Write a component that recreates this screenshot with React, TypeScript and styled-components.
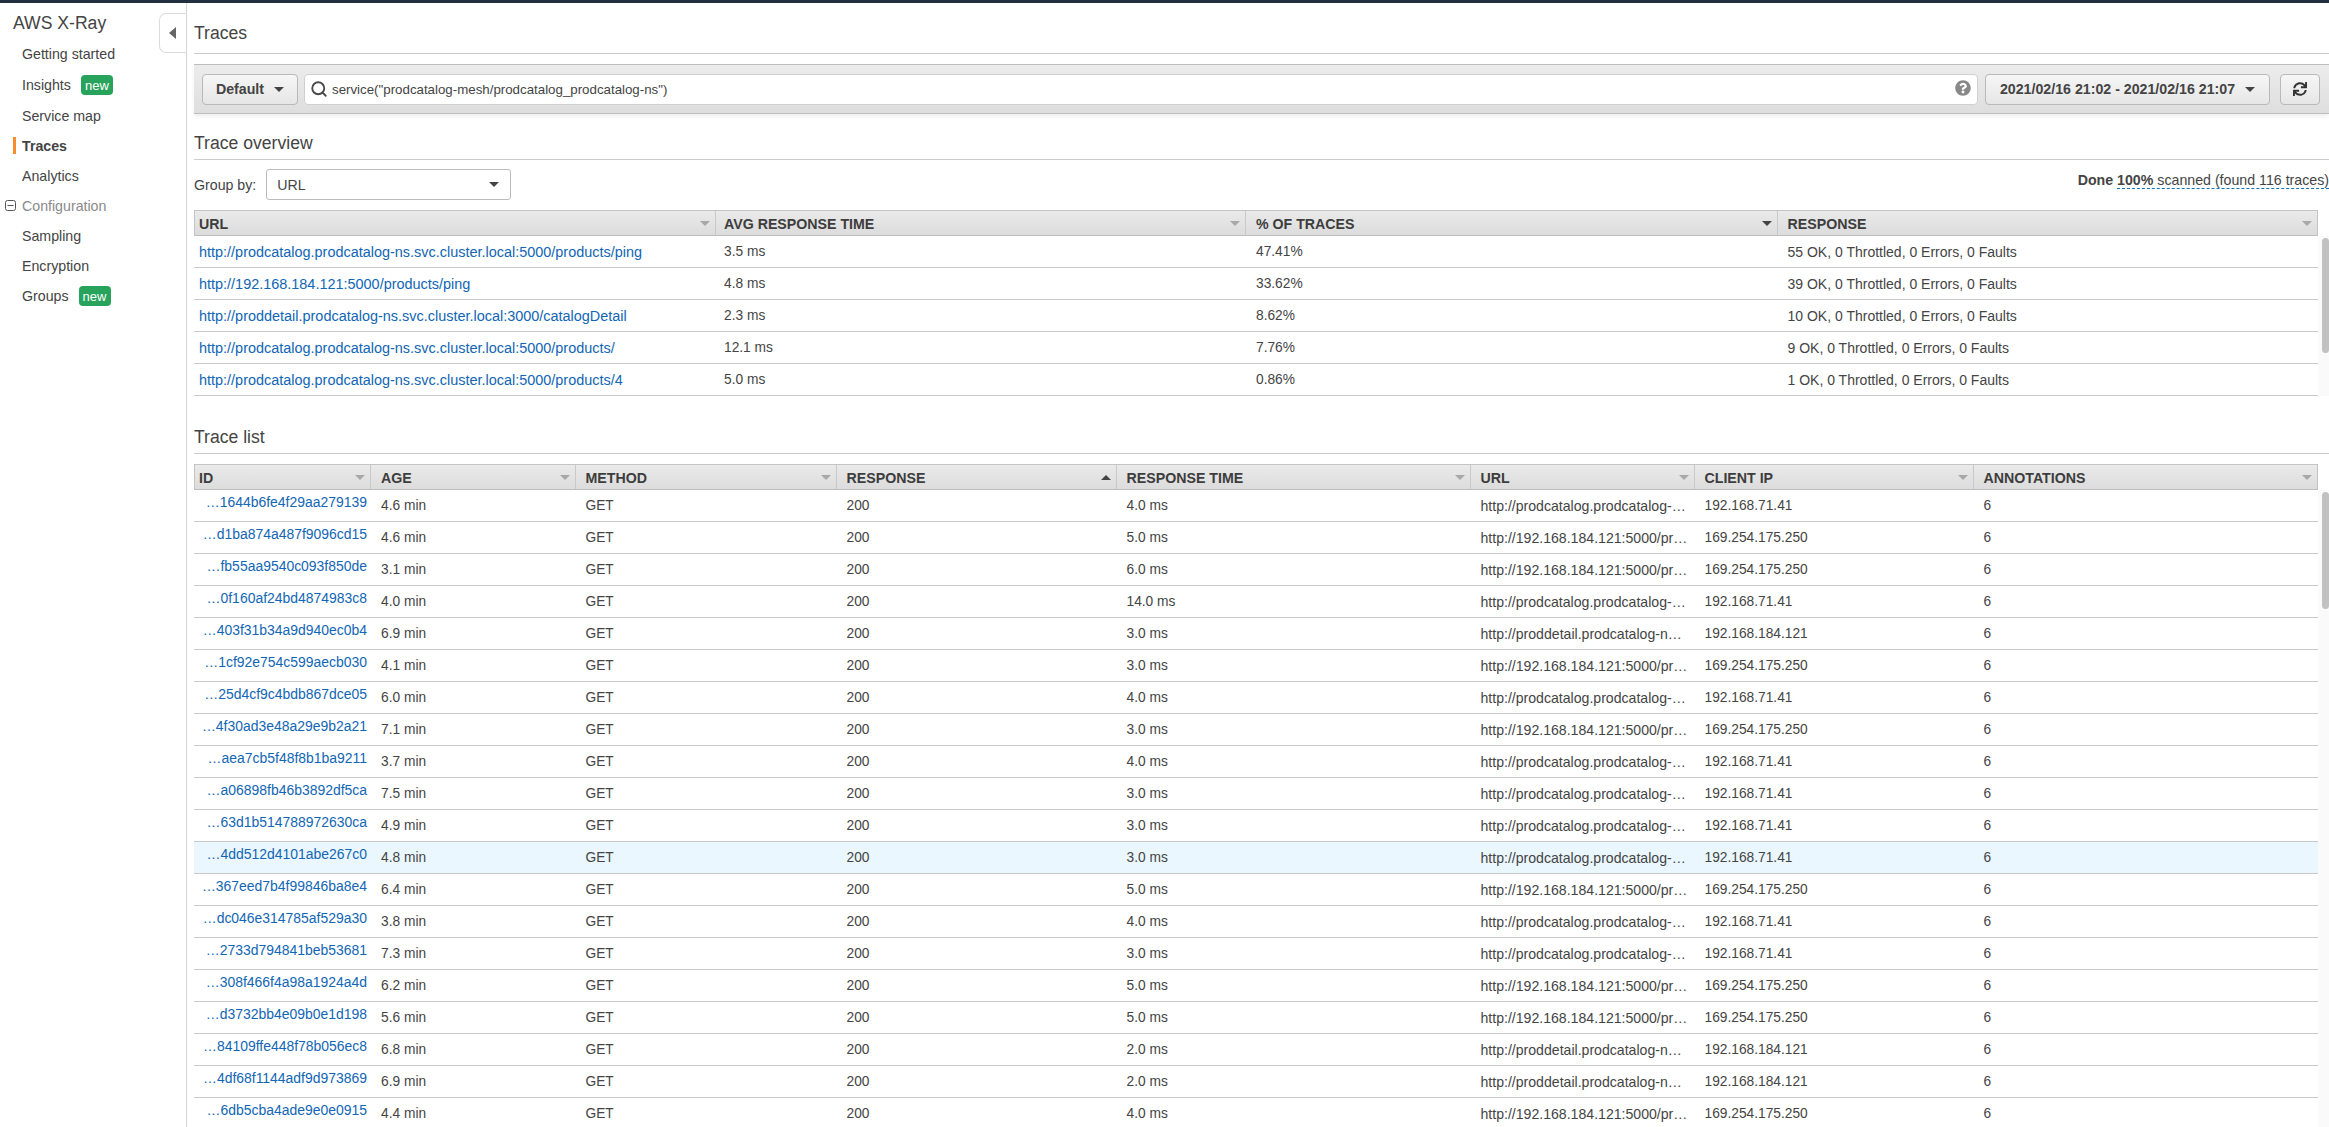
import React from "react";
import styled, { createGlobalStyle } from "styled-components";
import { Search } from "lucide-react";
import { FaQuestionCircle, FaSync } from "react-icons/fa";

const Global = createGlobalStyle`
  html, body, #root { margin: 0; height: 100%; overflow: hidden; background: #fff; }
  body { font-family: "Liberation Sans", Arial, sans-serif; color: #444; }
  * { box-sizing: border-box; }
`;

const Page = styled.div`
  height: 1127px;
  display: flex;
  flex-direction: column;
  overflow: hidden;
`;
const TopBar = styled.div`
  height: 3px;
  flex: none;
  background: #232f3e;
`;
const Body = styled.div`
  flex: 1;
  display: flex;
  min-height: 0;
`;

/* ---------- side navigation ---------- */
const Sidebar = styled.nav`
  position: relative;
  flex: none;
  width: 187px;
  border-right: 1px solid #d5d5d5;
`;
const Brand = styled.div`
  padding: 8px 0 4px 13px;
  font-size: 17.6px;
  line-height: 24px;
  color: #444;
`;
const NavItem = styled.div<{ $active?: boolean; $tall?: boolean; $muted?: boolean }>`
  position: relative;
  display: flex;
  align-items: center;
  gap: 10px;
  height: ${(p) => (p.$tall ? 32 : 30)}px;
  padding-left: 22px;
  font-size: 14.2px;
  font-weight: ${(p) => (p.$active ? 700 : 400)};
  color: ${(p) => (p.$muted ? "#8a8a8a" : "#444")};
`;
const ActiveMark = styled.span`
  position: absolute;
  left: 13px;
  top: 6px;
  width: 3px;
  height: 17px;
  background: #f68d2e;
`;
const ExpandIcon = styled.svg`
  position: absolute;
  left: 5px;
  top: 9px;
  width: 11px;
  height: 11px;
`;
const NewBadge = styled.span`
  display: inline-flex;
  align-items: center;
  justify-content: center;
  width: 32px;
  height: 20px;
  border-radius: 4px;
  background: #28a35c;
  color: #fff;
  font-size: 13px;
`;
const CollapseTab = styled.button`
  position: absolute;
  top: 10px;
  right: -1px;
  width: 28px;
  height: 40px;
  padding: 0 0 0 9px;
  display: flex;
  align-items: center;
  background: #fff;
  border: 1px solid #dcdcdc;
  border-right: 1px solid #d5d5d5;
  border-radius: 7px 0 0 7px;
`;
const LeftCaret = styled.span`
  width: 0;
  height: 0;
  border-style: solid;
  border-width: 6px 7px 6px 0;
  border-color: transparent #666 transparent transparent;
`;

/* ---------- main column ---------- */
const Main = styled.main`
  flex: 1;
  min-width: 0;
  padding-left: 7px;
`;
const Heading = styled.h2<{ $top: number }>`
  margin: 0;
  padding: ${(p) => p.$top}px 0 3px;
  font-size: 17.6px;
  font-weight: 400;
  line-height: 26px;
  color: #444;
  border-bottom: 1px solid #ccc;
`;
const PageHeading = styled(Heading)`
  padding-bottom: 7px;
`;
const Toolbar = styled.div`
  display: flex;
  align-items: center;
  height: 50px;
  margin-top: 10px;
  padding: 0 9px 0 8px;
  background: linear-gradient(#ececec, #dedede);
  border-top: 1px solid #bdbdbd;
  border-bottom: 1px solid #bdbdbd;
  box-shadow: 0 3px 4px rgba(0, 0, 0, 0.06);
`;
const Button = styled.button<{ $w: number; $gapLeft?: number }>`
  flex: none;
  display: flex;
  align-items: center;
  justify-content: center;
  gap: 10px;
  width: ${(p) => p.$w}px;
  height: 31px;
  margin-left: ${(p) => p.$gapLeft ?? 0}px;
  padding: 0;
  font-family: inherit;
  font-size: 14.2px;
  font-weight: 700;
  color: #444;
  background: linear-gradient(#f6f6f6, #e6e6e6);
  border: 1px solid #b9b9b9;
  border-radius: 4px;
`;
const Caret = styled.span<{ $color?: string; $up?: boolean }>`
  flex: none;
  width: 0;
  height: 0;
  border-left: 5px solid transparent;
  border-right: 5px solid transparent;
  ${(p) => (p.$up ? "border-bottom" : "border-top")}: 5px solid ${(p) => p.$color ?? "#444"};
`;
const SearchBox = styled.div`
  flex: 1;
  display: flex;
  align-items: center;
  height: 31px;
  margin-left: 6px;
  padding: 0 6px 0 5px;
  background: #fff;
  border: 1px solid #d0d0d0;
  border-radius: 4px;
  font-size: 13.3px;
  color: #444;
`;
const SearchIcon = styled(Search)`
  flex: none;
  margin-right: 4px;
  color: #4a4a4a;
`;
const QueryText = styled.span`
  flex: 1;
`;
const HelpIcon = styled(FaQuestionCircle)`
  flex: none;
  color: #888;
  font-size: 16px;
  margin-top: -3px;
`;
const RefreshIcon = styled(FaSync)`
  color: #333;
  font-size: 14px;
`;

const GroupRow = styled.div`
  display: flex;
  align-items: center;
  justify-content: space-between;
  margin: 9px 0 10px;
  height: 31px;
  font-size: 14.2px;
`;
const GroupBy = styled.label`
  display: flex;
  align-items: center;
  gap: 10px;
`;
const SelectBox = styled.div`
  display: flex;
  align-items: center;
  justify-content: space-between;
  width: 245px;
  height: 31px;
  padding: 0 11px 0 10px;
  background: #fff;
  border: 1px solid #bbb;
  border-radius: 3px;
`;
const Status = styled.div`
  margin-top: -9px;
`;
const Scanned = styled.span`
  border-bottom: 1px dashed #0f73bb;
`;
const Strong = styled.b`
  font-weight: 700;
`;

/* ---------- data tables ---------- */
const TableShell = styled.div<{ $top?: number }>`
  display: flex;
  align-items: stretch;
  margin-top: ${(p) => p.$top ?? 0}px;
`;
const TableFrame = styled.div`
  flex: none;
  width: 2124px;
`;
const Gutter = styled.div`
  flex: 1;
  margin-top: 26px;
  padding: 2px 0 0 4px;
  background: #fafafa;
`;
const Thumb = styled.div<{ $h: number }>`
  width: 7px;
  height: ${(p) => p.$h}px;
  border-radius: 4px;
  background: #c1c1c1;
`;
const HeaderRow = styled.div<{ $cols: string }>`
  display: grid;
  grid-template-columns: ${(p) => p.$cols};
  height: 26px;
  background: linear-gradient(#eaeaea, #dcdcdc);
  border: 1px solid #c4c4c4;
  border-bottom-color: #bdbdbd;
`;
const HeaderCell = styled.div<{ $pad?: number }>`
  display: flex;
  align-items: center;
  justify-content: space-between;
  min-width: 0;
  padding: 1px 5px 0 ${(p) => p.$pad ?? 10}px;
  font-size: 14.2px;
  font-weight: 700;
  color: #3d3d3d;
  border-right: 1px solid #c9c9c9;
  text-transform: uppercase;
  white-space: nowrap;
  &:first-child { padding-left: 4px; }
  &:last-child { border-right: 0; }
`;
const Row = styled.div<{ $cols: string; $hot?: boolean }>`
  display: grid;
  grid-template-columns: ${(p) => p.$cols};
  height: 32px;
  background: ${(p) => (p.$hot ? "#ebf7fe" : "#fff")};
  border-bottom: 1px solid #c9c9c9;
`;
const Cell = styled.div<{ $pad?: number; $size?: number }>`
  display: flex;
  align-items: center;
  min-width: 0;
  padding-left: ${(p) => p.$pad ?? 11}px;
  font-size: ${(p) => p.$size ?? 13.75}px;
  color: #444;
  white-space: nowrap;
  &:first-child { padding-left: 5px; }
`;
const IdCell = styled(Cell)`
  justify-content: flex-end;
  padding: 0 3px 7px 0;
`;
const Link = styled.a`
  color: #1166b5;
  text-decoration: none;
`;

const OVERVIEW_COLS = "521px 530px 531.5px 1fr";
const LIST_COLS = "176px 204.5px 261px 280px 354px 224px 279px 1fr";

const PROD = "http://prodcatalog.prodcatalog-ns.svc.cluster.local:5000/products/ping";
const IP = "http://192.168.184.121:5000/products/ping";
const DETAIL = "http://proddetail.prodcatalog-ns.svc.cluster.local:3000/catalogDetail";
const PROD_CUT = "http://prodcatalog.prodcatalog-…";
const IP_CUT = "http://192.168.184.121:5000/pr…";
const DETAIL_CUT = "http://proddetail.prodcatalog-n…";
const A = "192.168.71.41";
const B = "169.254.175.250";
const C = "192.168.184.121";

const overview = [
  [PROD, "3.5 ms", "47.41%", "55 OK, 0 Throttled, 0 Errors, 0 Faults"],
  [IP, "4.8 ms", "33.62%", "39 OK, 0 Throttled, 0 Errors, 0 Faults"],
  [DETAIL, "2.3 ms", "8.62%", "10 OK, 0 Throttled, 0 Errors, 0 Faults"],
  ["http://prodcatalog.prodcatalog-ns.svc.cluster.local:5000/products/", "12.1 ms", "7.76%", "9 OK, 0 Throttled, 0 Errors, 0 Faults"],
  ["http://prodcatalog.prodcatalog-ns.svc.cluster.local:5000/products/4", "5.0 ms", "0.86%", "1 OK, 0 Throttled, 0 Errors, 0 Faults"],
];

const traces: [string, string, string, string, string][] = [
  ["1644b6fe4f29aa279139", "4.6", "4.0", PROD_CUT, A],
  ["d1ba874a487f9096cd15", "4.6", "5.0", IP_CUT, B],
  ["fb55aa9540c093f850de", "3.1", "6.0", IP_CUT, B],
  ["0f160af24bd4874983c8", "4.0", "14.0", PROD_CUT, A],
  ["403f31b34a9d940ec0b4", "6.9", "3.0", DETAIL_CUT, C],
  ["1cf92e754c599aecb030", "4.1", "3.0", IP_CUT, B],
  ["25d4cf9c4bdb867dce05", "6.0", "4.0", PROD_CUT, A],
  ["4f30ad3e48a29e9b2a21", "7.1", "3.0", IP_CUT, B],
  ["aea7cb5f48f8b1ba9211", "3.7", "4.0", PROD_CUT, A],
  ["a06898fb46b3892df5ca", "7.5", "3.0", PROD_CUT, A],
  ["63d1b514788972630ca", "4.9", "3.0", PROD_CUT, A],
  ["4dd512d4101abe267c0", "4.8", "3.0", PROD_CUT, A],
  ["367eed7b4f99846ba8e4", "6.4", "5.0", IP_CUT, B],
  ["dc046e314785af529a30", "3.8", "4.0", PROD_CUT, A],
  ["2733d794841beb53681", "7.3", "3.0", PROD_CUT, A],
  ["308f466f4a98a1924a4d", "6.2", "5.0", IP_CUT, B],
  ["d3732bb4e09b0e1d198", "5.6", "5.0", IP_CUT, B],
  ["84109ffe448f78b056ec8", "6.8", "2.0", DETAIL_CUT, C],
  ["4df68f1144adf9d973869", "6.9", "2.0", DETAIL_CUT, C],
  ["6db5cba4ade9e0e0915", "4.4", "4.0", IP_CUT, B],
];

const Head = ({ label, sort, pad }: { label: string; sort?: "up" | "down"; pad?: number }) => (
  <HeaderCell $pad={pad}>
    {label}
    <Caret $up={sort === "up"} $color={sort ? "#444" : "#a8a8a8"} />
  </HeaderCell>
);

export default function App() {
  return (
    <Page>
      <Global />
      <TopBar />
      <Body>
        <Sidebar>
          <Brand>AWS X-Ray</Brand>
          <NavItem>Getting started</NavItem>
          <NavItem $tall>
            Insights <NewBadge>new</NewBadge>
          </NavItem>
          <NavItem>Service map</NavItem>
          <NavItem $active>
            <ActiveMark />
            Traces
          </NavItem>
          <NavItem>Analytics</NavItem>
          <NavItem $muted>
            <ExpandIcon viewBox="0 0 11 11">
              <rect x="0.5" y="0.5" width="10" height="10" rx="2" fill="none" stroke="#555" />
              <path d="M2.5 5.5h6" stroke="#555" />
            </ExpandIcon>
            Configuration
          </NavItem>
          <NavItem>Sampling</NavItem>
          <NavItem>Encryption</NavItem>
          <NavItem>
            Groups <NewBadge>new</NewBadge>
          </NavItem>
          <CollapseTab aria-label="Collapse">
            <LeftCaret />
          </CollapseTab>
        </Sidebar>

        <Main>
          <PageHeading $top={17}>Traces</PageHeading>
          <Toolbar>
            <Button $w={96}>
              Default <Caret />
            </Button>
            <SearchBox>
              <SearchIcon size={18} strokeWidth={2.5} />
              <QueryText>service("prodcatalog-mesh/prodcatalog_prodcatalog-ns")</QueryText>
              <HelpIcon />
            </SearchBox>
            <Button $w={285} $gapLeft={7}>
              2021/02/16 21:02 - 2021/02/16 21:07 <Caret />
            </Button>
            <Button $w={40} $gapLeft={10}>
              <RefreshIcon />
            </Button>
          </Toolbar>

          <Heading $top={16}>Trace overview</Heading>
          <GroupRow>
            <GroupBy>
              Group by:
              <SelectBox>
                URL <Caret />
              </SelectBox>
            </GroupBy>
            <Status>
              <Strong>Done </Strong>
              <Scanned>
                <Strong>100%</Strong> scanned (found 116 traces)
              </Scanned>
            </Status>
          </GroupRow>
          <TableShell>
            <TableFrame>
              <HeaderRow $cols={OVERVIEW_COLS}>
                <Head label="URL" />
                <Head label="Avg response time" pad={8} />
                <Head label="% of traces" sort="down" />
                <Head label="Response" />
              </HeaderRow>
              {overview.map((r) => (
                <Row key={r[0]} $cols={OVERVIEW_COLS}>
                  <Cell $size={14.45}>
                    <Link href="#">{r[0]}</Link>
                  </Cell>
                  <Cell $pad={9}>{r[1]}</Cell>
                  <Cell>{r[2]}</Cell>
                  <Cell $size={14}>{r[3]}</Cell>
                </Row>
              ))}
            </TableFrame>
            <Gutter>
              <Thumb $h={115} />
            </Gutter>
          </TableShell>

          <Heading $top={28}>Trace list</Heading>
          <TableShell $top={10}>
            <TableFrame>
              <HeaderRow $cols={LIST_COLS}>
                <Head label="ID" />
                <Head label="Age" />
                <Head label="Method" />
                <Head label="Response" sort="up" />
                <Head label="Response time" />
                <Head label="URL" />
                <Head label="Client IP" />
                <Head label="Annotations" />
              </HeaderRow>
              {traces.map((t, i) => (
                <Row key={t[0]} $cols={LIST_COLS} $hot={i === 11}>
                  <IdCell $size={13.95}>
                    <Link href="#">…{t[0]}</Link>
                  </IdCell>
                  <Cell>{t[1]} min</Cell>
                  <Cell>GET</Cell>
                  <Cell>200</Cell>
                  <Cell>{t[2]} ms</Cell>
                  <Cell $size={14.1}>{t[3]}</Cell>
                  <Cell>{t[4]}</Cell>
                  <Cell>6</Cell>
                </Row>
              ))}
            </TableFrame>
            <Gutter>
              <Thumb $h={117} />
            </Gutter>
          </TableShell>
        </Main>
      </Body>
    </Page>
  );
}
